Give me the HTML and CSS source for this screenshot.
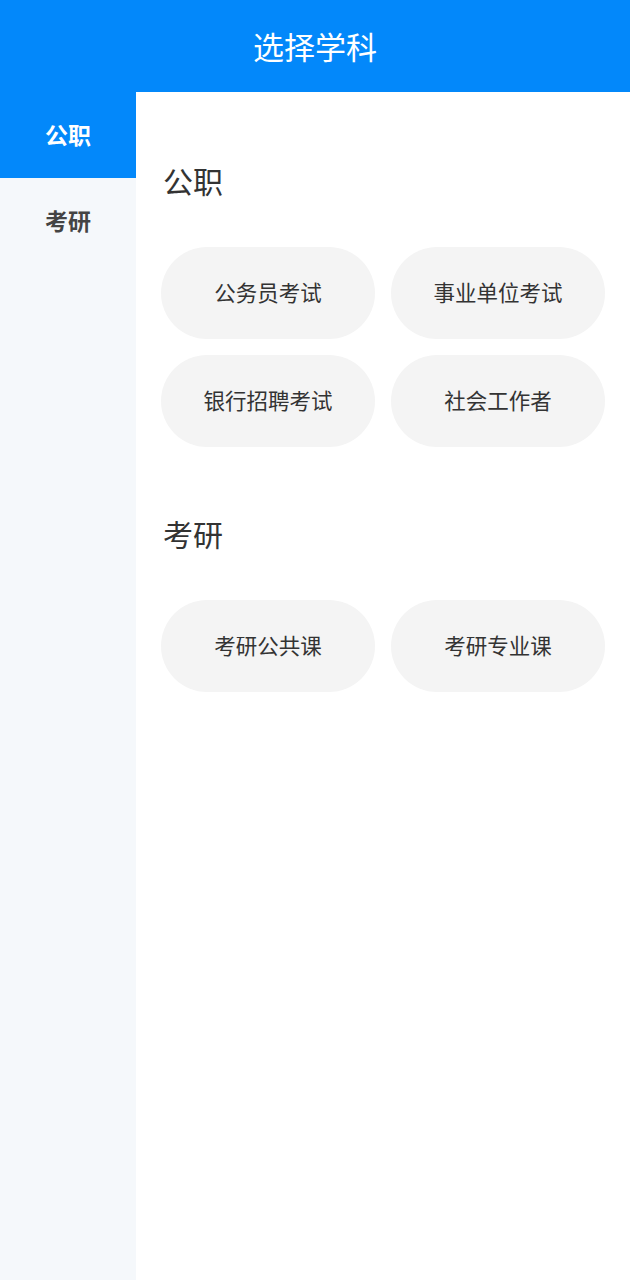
FILE: index.html
```html
<!DOCTYPE html>
<html lang="zh">
<head>
<meta charset="utf-8">
<title>选择学科</title>
<link rel="stylesheet" href="styles.css">
</head>
<body>
<div class="page">
  <header class="topbar">选择学科</header>
  <div class="main">
    <nav class="sidebar">
      <div class="tab active">公职</div>
      <div class="tab">考研</div>
    </nav>
    <div class="content">
      <section class="section">
        <h2 class="section-title">公职</h2>
        <div class="grid">
          <div class="chip">公务员考试</div>
          <div class="chip">事业单位考试</div>
          <div class="chip">银行招聘考试</div>
          <div class="chip">社会工作者</div>
        </div>
      </section>
      <section class="section">
        <h2 class="section-title">考研</h2>
        <div class="grid">
          <div class="chip">考研公共课</div>
          <div class="chip">考研专业课</div>
        </div>
      </section>
    </div>
  </div>
</div>
</body>
</html>
```

FILE: styles.css
```css
* { box-sizing: border-box; }
html, body {
  margin: 0;
  padding: 0;
  height: 100%;
}
body {
  font-family: "Noto Sans CJK SC", "Noto Sans", sans-serif;
  color: #333;
  background: #fff;
}
.page {
  display: flex;
  flex-direction: column;
  height: 1280px;
}
.topbar {
  height: 92px;
  flex: none;
  background: #0388fa;
  color: #fff;
  font-size: 31px;
  display: flex;
  align-items: center;
  justify-content: center;
  padding-bottom: 2px;
}
.main {
  flex: 1;
  display: flex;
}
.sidebar {
  width: 136px;
  flex: none;
  background: #f5f8fb;
}
.tab {
  height: 86px;
  display: flex;
  align-items: center;
  justify-content: center;
  font-size: 23px;
  font-weight: bold;
  color: #444;
  padding-bottom: 3px;
}
.tab.active {
  background: #0388fa;
  color: #fff;
}
.content {
  flex: 1;
  padding: 0 25px;
}
.section {
  padding-top: 68px;
}
.section + .section {
  padding-top: 66px;
}
.section-title {
  margin: 0 0 47px 2px;
  font-size: 30px;
  font-weight: normal;
  line-height: 40px;
  color: #333;
}
.grid {
  display: grid;
  grid-template-columns: 214px 214px;
  gap: 16px;
}
.chip {
  height: 92px;
  border-radius: 46px;
  background: #f4f4f4;
  display: flex;
  align-items: center;
  justify-content: center;
  font-size: 21.5px;
  color: #333;
  padding-bottom: 4px;
}
```
